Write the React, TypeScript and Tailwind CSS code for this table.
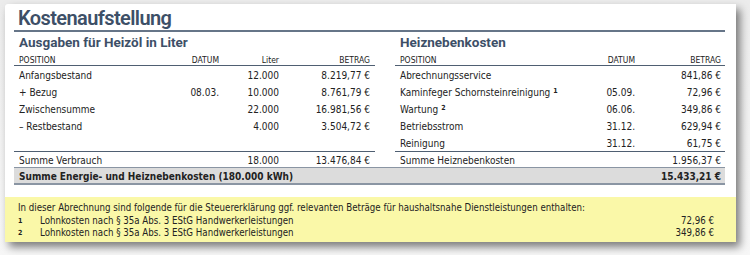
const body = { fontFamily: '"DejaVu Sans Condensed", "DejaVu Sans", sans-serif' }
const head = { fontFamily: 'Roboto, "Liberation Sans", sans-serif' }

const heizoel = [
  { pos: 'Anfangsbestand', datum: '', liter: '12.000', betrag: '8.219,77 €' },
  { pos: '+ Bezug', datum: '08.03.', liter: '10.000', betrag: '8.761,79 €' },
  { pos: 'Zwischensumme', datum: '', liter: '22.000', betrag: '16.981,56 €' },
  { pos: '– Restbestand', datum: '', liter: '4.000', betrag: '3.504,72 €' },
  { pos: '', datum: '', liter: '', betrag: '' },
]

const neben = [
  { pos: 'Abrechnungsservice', datum: '', betrag: '841,86 €', note: '' },
  { pos: 'Kaminfeger Schornsteinreinigung', datum: '05.09.', betrag: '72,96 €', note: '1' },
  { pos: 'Wartung', datum: '06.06.', betrag: '349,86 €', note: '2' },
  { pos: 'Betriebsstrom', datum: '31.12.', betrag: '629,94 €', note: '' },
  { pos: 'Reinigung', datum: '31.12.', betrag: '61,75 €', note: '' },
]

const footnotes = [
  { n: '1', text: 'Lohnkosten nach § 35a Abs. 3 EStG Handwerkerleistungen', betrag: '72,96 €' },
  { n: '2', text: 'Lohnkosten nach § 35a Abs. 3 EStG Handwerkerleistungen', betrag: '349,86 €' },
]

function SectionTitle({ children }: { children: React.ReactNode }) {
  return (
    <h2 style={head} className="h-[19px] pl-[5px] pt-[2px] text-[13.5px] font-bold leading-[17px] text-[#3d4f67]">
      {children}
    </h2>
  )
}

export default function App() {
  return (
    <div style={body} className="h-[255px] w-[750px] overflow-hidden bg-gradient-to-b from-[#ececec] to-[#f7f7f7] pt-[4px] text-[10px] text-[#222]">
      <div className="ml-[5px] w-[731px] rounded-tl-[3px] bg-white shadow-[4px_5px_8px_rgba(0,0,0,0.5)]">
        <div className="pl-[9px] pr-[11px]">
          {/* Titel */}
          <h1 style={head} className="h-[28px] border-b-2 border-[#667588] pl-[4px] pt-[4px] text-[20px] font-semibold leading-[21px] tracking-[-0.6px] text-[#3d4f67]">
            Kostenaufstellung
          </h1>

          <div className="flex gap-[20px]">
            {/* Heizöl */}
            <div className="w-[361px]">
              <SectionTitle>Ausgaben für Heizöl in Liter</SectionTitle>
              <div className="grid h-[15px] grid-cols-[140px_60px_60px_91px] border-b border-[#4f5f72] px-[5px] pt-[4px] text-[8.5px] leading-[10px]">
                <span>POSITION</span>
                <span className="text-right">DATUM</span>
                <span className="text-right">Liter</span>
                <span className="text-right">BETRAG</span>
              </div>
              {heizoel.map((r, i) => (
                <div key={i} className="grid h-[17px] grid-cols-[140px_60px_60px_91px] px-[5px] pt-[3px] leading-[14px]">
                  <span>{r.pos}</span>
                  <span className="text-right">{r.datum}</span>
                  <span className="text-right">{r.liter}</span>
                  <span className="text-right">{r.betrag}</span>
                </div>
              ))}
              <div className="grid h-[16px] grid-cols-[140px_60px_60px_91px] border-t border-[#4f5f72] px-[5px] pt-[2px] leading-[13px]">
                <span>Summe Verbrauch</span>
                <span />
                <span className="text-right">18.000</span>
                <span className="text-right">13.476,84 €</span>
              </div>
            </div>

            {/* Heiznebenkosten */}
            <div className="w-[330px]">
              <SectionTitle>Heiznebenkosten</SectionTitle>
              <div className="grid h-[15px] grid-cols-[175px_60px_86px] border-b border-[#4f5f72] pl-[5px] pr-[4px] pt-[4px] text-[8.5px] leading-[10px]">
                <span>POSITION</span>
                <span className="text-right">DATUM</span>
                <span className="text-right">BETRAG</span>
              </div>
              {neben.map((r, i) => (
                <div key={i} className="grid h-[17px] grid-cols-[175px_60px_86px] pl-[5px] pr-[4px] pt-[3px] leading-[14px]">
                  <span className="whitespace-nowrap">
                    {r.pos}
                    {r.note && <sup className="ml-[3px] text-[7px] font-bold">{r.note}</sup>}
                  </span>
                  <span className="text-right">{r.datum}</span>
                  <span className="text-right">{r.betrag}</span>
                </div>
              ))}
              <div className="flex h-[16px] justify-between border-t border-[#4f5f72] pl-[5px] pr-[4px] pt-[2px] leading-[13px]">
                <span>Summe Heiznebenkosten</span>
                <span>1.956,37 €</span>
              </div>
            </div>
          </div>

          {/* Gesamtsumme */}
          <div className="flex h-[18px] justify-between border-b-2 border-t border-[#8a95a3] bg-[#dcdcdc] pl-[5px] pr-[4px] pt-[2px] font-bold leading-[13px]">
            <span>Summe Energie- und Heiznebenkosten (180.000 kWh)</span>
            <span>15.433,21 €</span>
          </div>
        </div>

        {/* Hinweis */}
        <div className="mt-[12px] bg-[#faf8a8] pb-[2px] pl-[13px] pr-[22px] pt-[5px] text-[9.65px] leading-[12.5px]">
          <p>
            In dieser Abrechnung sind folgende für die Steuererklärung ggf. relevanten Beträge für haushaltsnahe
            Dienstleistungen enthalten:
          </p>
          {footnotes.map(f => (
            <div key={f.n} className="flex">
              <span className="w-[22px] text-[7px] font-bold">{f.n}</span>
              <span className="flex-1">{f.text}</span>
              <span>{f.betrag}</span>
            </div>
          ))}
        </div>
      </div>
    </div>
  )
}
